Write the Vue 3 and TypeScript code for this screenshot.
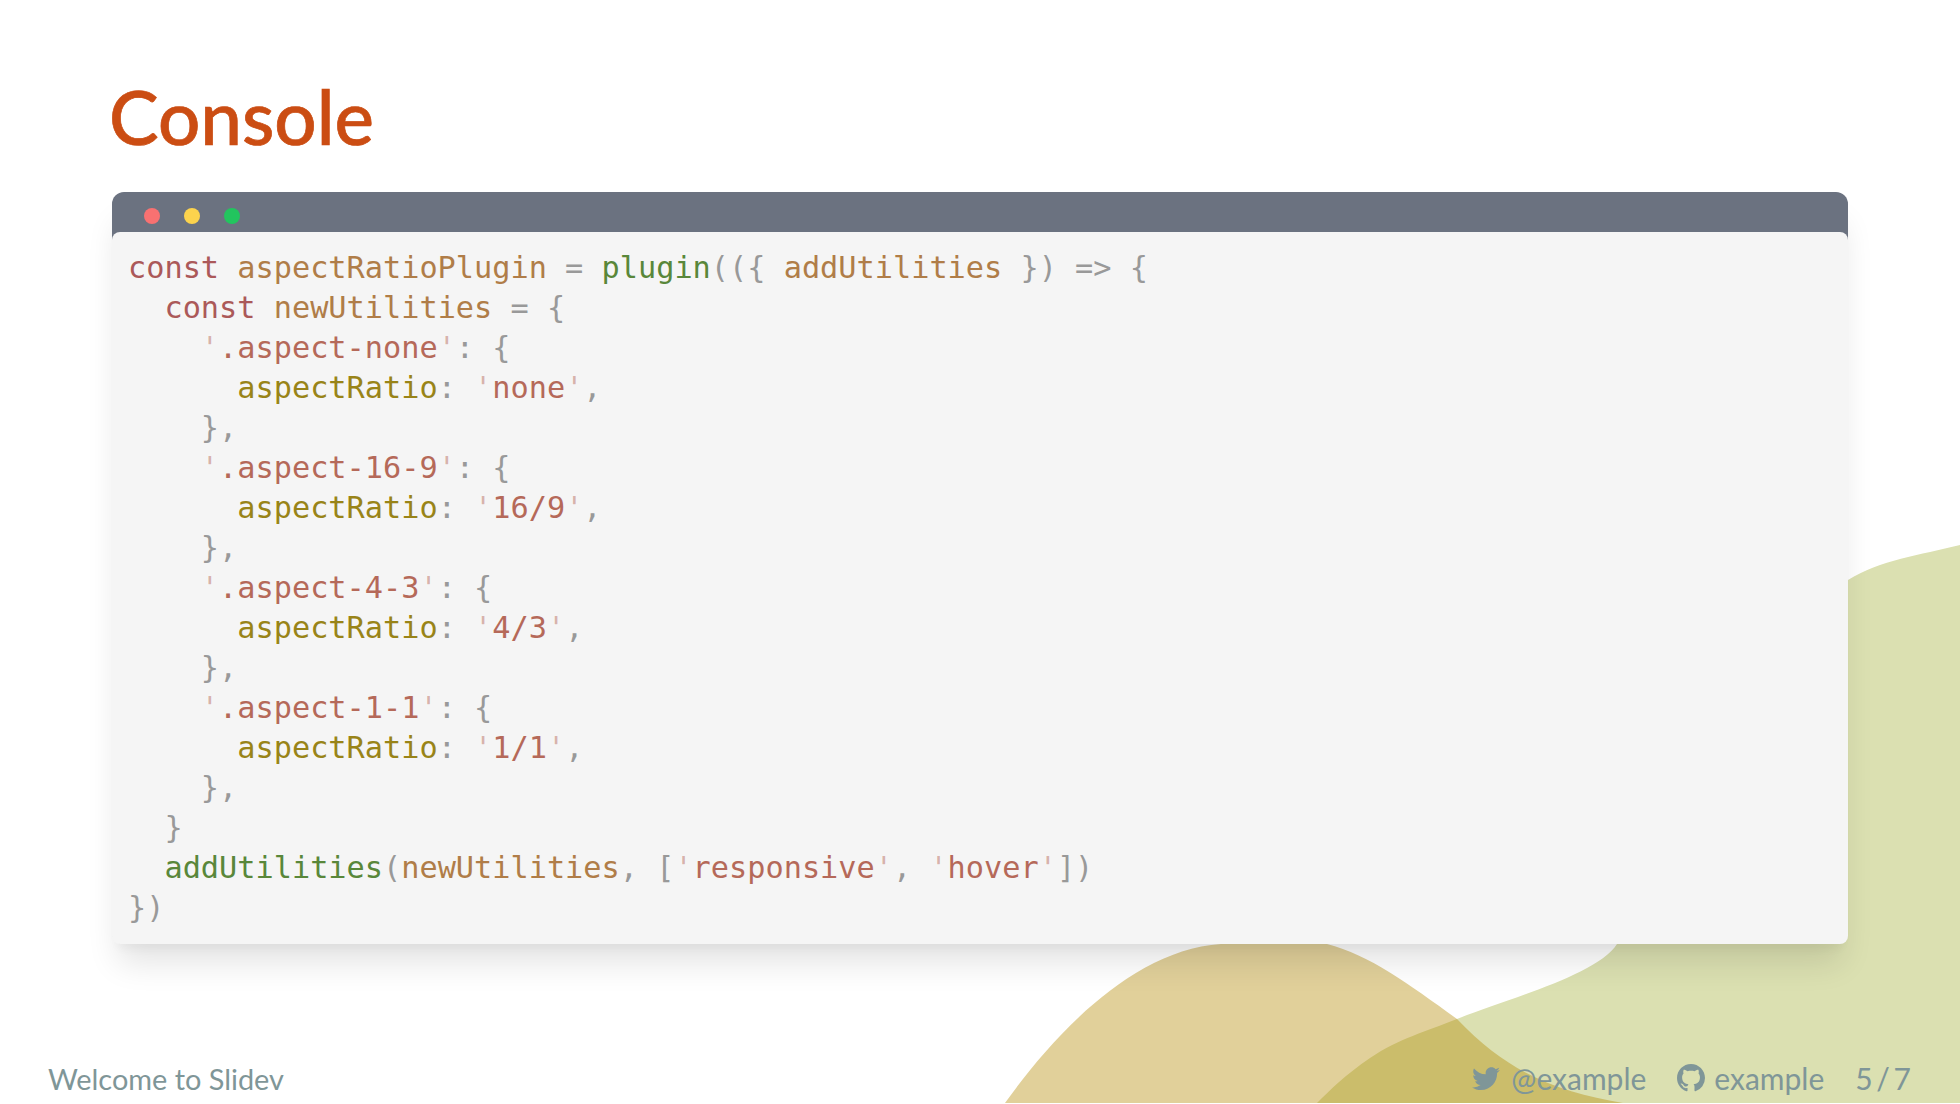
<script setup lang="ts">
type Tok = [string, string]
const K = 'kw', V = 'var', F = 'fn', P = 'pun', S = 'str', Q = 'quo', A = 'prop'
const lines: Tok[][] = [
  [['const', K], [' ', P], ['aspectRatioPlugin', V], [' ', P], ['=', P], [' ', P], ['plugin', F], ['(({ ', P], ['addUtilities', V], [' }) => {', P]],
  [['  ', P], ['const', K], [' ', P], ['newUtilities', V], [' = {', P]],
  [['    ', P], ["'", Q], ['.aspect-none', S], ["'", Q], [': {', P]],
  [['      ', P], ['aspectRatio', A], [': ', P], ["'", Q], ['none', S], ["'", Q], [',', P]],
  [['    },', P]],
  [['    ', P], ["'", Q], ['.aspect-16-9', S], ["'", Q], [': {', P]],
  [['      ', P], ['aspectRatio', A], [': ', P], ["'", Q], ['16/9', S], ["'", Q], [',', P]],
  [['    },', P]],
  [['    ', P], ["'", Q], ['.aspect-4-3', S], ["'", Q], [': {', P]],
  [['      ', P], ['aspectRatio', A], [': ', P], ["'", Q], ['4/3', S], ["'", Q], [',', P]],
  [['    },', P]],
  [['    ', P], ["'", Q], ['.aspect-1-1', S], ["'", Q], [': {', P]],
  [['      ', P], ['aspectRatio', A], [': ', P], ["'", Q], ['1/1', S], ["'", Q], [',', P]],
  [['    },', P]],
  [['  }', P]],
  [['  ', P], ['addUtilities', F], ['(', P], ['newUtilities', V], [', [', P], ["'", Q], ['responsive', S], ["'", Q], [', ', P], ["'", Q], ['hover', S], ["'", Q], ['])', P]],
  [['})', P]],
]
</script>

<template>
  <div class="slide">
    <svg class="blobs" viewBox="0 0 1960 1103" width="1960" height="1103" aria-hidden="true">
      <path class="green" d="M1960 545 C1920 555 1880 560 1848 580 C1780 620 1660 860 1617 944 C1597 975 1510 998 1457 1019 C1425 1032 1400 1038 1370 1058 C1345 1075 1330 1090 1317 1103 L1960 1103 Z" />
      <path class="tan" d="M1005 1103 C1050 1040 1130 950 1221 944 C1255 936 1295 936 1327 944 C1370 955 1410 985 1457 1019 C1510 1075 1560 1092 1623 1103 Z" />
    </svg>
    <h1 class="title">Console</h1>
    <div class="window">
      <div class="bar">
        <span class="dot red"></span>
        <span class="dot yellow"></span>
        <span class="dot lime"></span>
      </div>
      <pre class="code"><div v-for="(line, i) in lines" :key="i" class="line"><span v-for="(t, j) in line" :key="j" :class="t[1]">{{ t[0] }}</span></div></pre>
    </div>
    <footer class="foot">
      <span class="left">Welcome to Slidev</span>
      <div class="right">
        <span class="item">
          <svg viewBox="0 0 24 24" width="32" height="32"><path fill="currentColor" d="M22.46 6c-.77.35-1.6.58-2.46.69.88-.53 1.56-1.37 1.88-2.38-.83.5-1.75.85-2.72 1.05C18.37 4.5 17.26 4 16 4c-2.35 0-4.27 1.92-4.27 4.29 0 .34.04.67.11.98C8.28 9.09 5.11 7.38 3 4.79c-.37.63-.58 1.37-.58 2.15 0 1.49.75 2.81 1.91 3.56-.71 0-1.37-.2-1.95-.5v.03c0 2.08 1.48 3.82 3.44 4.21a4.22 4.22 0 0 1-1.93.07 4.28 4.28 0 0 0 4 2.98 8.521 8.521 0 0 1-5.33 1.84c-.34 0-.68-.02-1.02-.06C3.44 20.29 5.7 21 8.12 21 16 21 20.33 14.46 20.33 8.79c0-.19 0-.37-.01-.56.84-.6 1.56-1.36 2.14-2.23z" /></svg>
          <span>@example</span>
        </span>
        <span class="item">
          <svg viewBox="0 0 16 16" width="28" height="28"><path fill="currentColor" d="M8 0C3.58 0 0 3.58 0 8c0 3.54 2.29 6.53 5.47 7.59.4.07.55-.17.55-.38 0-.19-.01-.82-.01-1.49-2.01.37-2.53-.49-2.69-.94-.09-.23-.48-.94-.82-1.13-.28-.15-.68-.52-.01-.53.63-.01 1.08.58 1.23.82.72 1.21 1.87.87 2.33.66.07-.52.28-.87.51-1.07-1.78-.2-3.64-.89-3.64-3.95 0-.87.31-1.59.82-2.15-.08-.2-.36-1.02.08-2.12 0 0 .67-.21 2.2.82.64-.18 1.32-.27 2-.27s1.36.09 2 .27c1.53-1.04 2.2-.82 2.2-.82.44 1.1.16 1.92.08 2.12.51.56.82 1.27.82 2.15 0 3.07-1.87 3.75-3.65 3.95.29.25.54.73.54 1.48 0 1.07-.01 1.93-.01 2.2 0 .21.15.46.55.38A8.01 8.01 0 0 0 16 8c0-4.42-3.58-8-8-8z" /></svg>
          <span>example</span>
        </span>
        <span class="page">5 / 7</span>
      </div>
    </footer>
  </div>
</template>

<style>
html, body { margin: 0; background: #ffffff; }
</style>

<style scoped>
.slide {
  position: relative;
  width: 1960px;
  height: 1103px;
  overflow: hidden;
  box-sizing: border-box;
  display: flex;
  flex-direction: column;
  padding: 72px 49px 0 112px;
  background: #ffffff;
  font-family: Lato, "Open Sans", sans-serif;
}
.blobs { position: absolute; left: 0; top: 0; display: block; }
.green { fill: #dbe0b1; }
.tan { fill: rgb(180, 138, 3); fill-opacity: 0.4; }
.title {
  position: relative;
  margin: 0 0 32px -3px;
  font-size: 74.5px;
  line-height: 88px;
  font-weight: 500;
  color: #cb4d13;
  -webkit-text-stroke: 0.7px #cb4d13;
}
.window {
  position: relative;
  width: 1736px;
  border-radius: 12px;
  background: #6b7280;
  box-shadow: 0 25px 32px -6px rgba(0, 0, 0, 0.11), 0 10px 10px -5px rgba(0, 0, 0, 0.04);
}
.bar {
  height: 40px;
  box-sizing: border-box;
  padding: 16px 0 0 32px;
  display: flex;
  gap: 24px;
}
.dot { width: 16px; height: 16px; border-radius: 50%; }
.red { background: #f87171; }
.yellow { background: #fcd34d; }
.lime { background: #22c55e; }
.code {
  margin: 0;
  padding: 16px;
  background: #f5f5f5;
  border-radius: 8px;
  font-family: "DejaVu Sans Mono", "Liberation Mono", monospace;
  font-size: 30.25px;
  line-height: 40px;
  color: #999999;
}
.line { height: 40px; white-space: pre; }
.kw { color: #ab5959; }
.var { color: #b07d48; }
.fn { color: #59873a; }
.pun { color: #999999; }
.str { color: #b56959; }
.quo { color: #b5695977; }
.prop { color: #998418; }
.foot {
  position: relative;
  margin: auto 0 0 -64px;
  height: 50px;
  display: flex;
  justify-content: space-between;
  align-items: center;
  font-size: 28.9px;
  color: #7f9698;
}
.right { display: flex; align-items: center; gap: 31px; font-size: 30px; }
.item { display: flex; align-items: center; gap: 9px; }
.page { word-spacing: -4px; }
</style>
